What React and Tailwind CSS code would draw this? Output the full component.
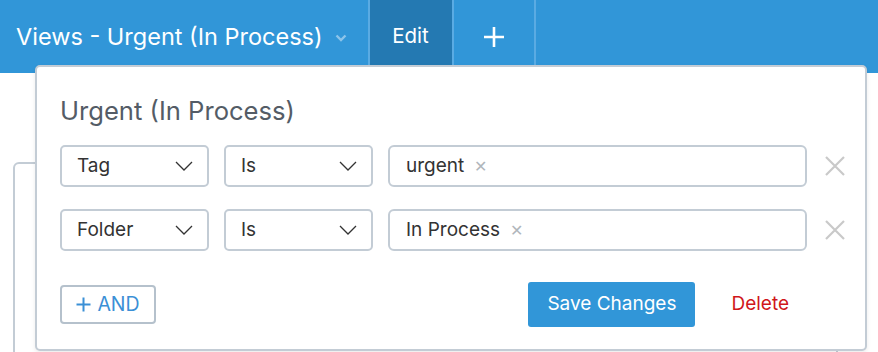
import React from 'react';

const font = { fontFamily: 'Inter, "Noto Sans", sans-serif' };

function Chevron() {
  return (
    <svg width="18" height="10" viewBox="0 0 18 10" fill="none" stroke="#333" strokeWidth="1.3">
      <path d="M1 1l8 8 8-8" />
    </svg>
  );
}

function Select({ label }) {
  return (
    <div className="flex h-[42px] w-[149px] items-center justify-between rounded-[5px] border-2 border-[#c3ccd5] bg-white pl-[15px] pr-[14px] text-[19px] text-[#333]">
      <span>{label}</span>
      <Chevron />
    </div>
  );
}

function TagInput({ value }) {
  return (
    <div className="flex h-[42px] flex-1 items-center rounded-[6px] border-2 border-[#c3ccd5] bg-white pl-[16px] text-[19px] text-[#333]">
      <span>{value}</span>
      <span className="ml-[10px] text-[16px] text-[#b0b6bc]">✕</span>
    </div>
  );
}

function Remove() {
  return (
    <svg width="22" height="22" viewBox="0 0 22 22" stroke="#c9c9c9" strokeWidth="2.2" className="ml-[17px]">
      <path d="M2 2l18 18M20 2L2 20" />
    </svg>
  );
}

function Row({ field, value }) {
  return (
    <div className="flex items-center gap-[15px] pr-[19px]">
      <Select label={field} />
      <Select label="Is" />
      <div className="flex flex-1 items-center">
        <TagInput value={value} />
        <Remove />
      </div>
    </div>
  );
}

export default function App() {
  return (
    <div className="relative h-[352px] w-[878px] overflow-hidden bg-white" style={font}>
      {/* header */}
      <div className="flex h-[73px] items-stretch bg-[#3196d8] text-white">
        <div className="flex items-center pl-[16px] pr-[21px]">
          <span className="text-[23.5px]">Views - Urgent (In Process)</span>
          <svg width="12" height="8" viewBox="0 0 12 8" className="ml-[12px] mt-[2px]" stroke="#8cc4ea" strokeWidth="2.4" fill="none">
            <path d="M1.5 1.5l4.5 4.5 4.5-4.5" />
          </svg>
        </div>
        <div className="flex w-[86px] items-center justify-center border-x-2 border-[#5aabe3] bg-[#2479b2] text-[20.5px]">Edit</div>
        <div className="flex w-[82px] items-center justify-center border-r-2 border-[#5aabe3]">
          <svg width="22" height="22" viewBox="0 0 22 22" stroke="white" strokeWidth="2.6">
            <path d="M11 1v20M1 11h20" />
          </svg>
        </div>
      </div>

      {/* card behind */}
      <div className="absolute left-[13px] top-[162px] h-[220px] w-[825px] rounded-[6px] border-2 border-[#c3ccd5] bg-white" />

      {/* popup */}
      <div className="absolute left-[35px] top-[65px] h-[286px] w-[832px] rounded-[5px] border-2 border-[#c3ccd5] bg-white pl-[23px] shadow-[0_2px_4px_rgba(0,0,0,0.08)]">
        <div className="pt-[28px] text-[25.6px] leading-[32px] text-[#545c66]">Urgent (In Process)</div>
        <div className="mt-[18px] flex flex-col gap-[22px]">
          <Row field="Tag" value="urgent" />
          <Row field="Folder" value="In Process" />
        </div>
        <div className="mt-[31px] flex items-center pr-[76px]">
          <div className="flex h-[39px] w-[96px] items-center justify-center gap-[6px] rounded-[4px] border-2 border-[#b5c1cc] text-[19.5px] text-[#3b90d6]">
            <svg width="15" height="15" viewBox="0 0 15 15" stroke="#3b90d6" strokeWidth="2">
              <path d="M7.5 0.5v14M0.5 7.5h14" />
            </svg>
            <span>AND</span>
          </div>
          <div className="ml-auto flex h-[45px] w-[167px] items-center justify-center rounded-[3px] bg-[#3196d8] text-[19px] text-white">
            Save Changes
          </div>
          <div className="ml-[36px] text-[19px] text-[#d0161a]">Delete</div>
        </div>
      </div>
    </div>
  );
}
